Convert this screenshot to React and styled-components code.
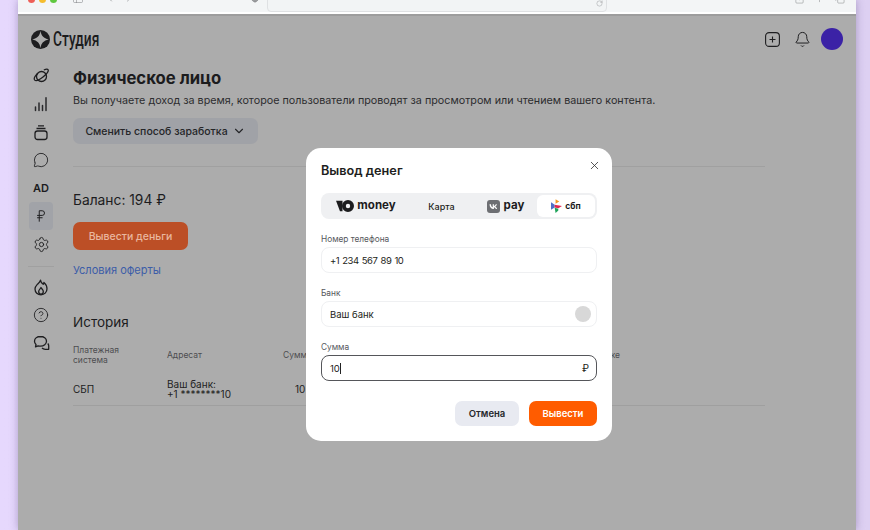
import React from "react";
import styled, { createGlobalStyle } from "styled-components";
import { ChevronDown, ChevronLeft, ChevronRight, X, Plus, Bell, MessageCircle, Settings, HelpCircle, RussianRuble, PanelLeft, Shield, RotateCw, Share, Copy } from "lucide-react";

const Global = createGlobalStyle`
  html, body { margin: 0; padding: 0; height: 100%; }
  body { font-family: "Inter", "Liberation Sans", sans-serif; overflow: hidden; background: #e4d5fb; }
  * { box-sizing: border-box; }
`;

const Desktop = styled.div`
  width: 870px;
  height: 530px;
  padding: 0 14px 0 18px;
  background: linear-gradient(90deg, #e6d8fd 0%, #ddd0f2 100%);
  display: flex;
  overflow: hidden;
`;
const Win = styled.div`
  position: relative;
  flex: 1;
  display: flex;
  flex-direction: column;
  box-shadow: 0 0 8px rgba(60, 40, 100, 0.35);
`;
const Toolbar = styled.div`
  height: 14px;
  flex: none;
  background: #f3f5f6;
  border-bottom: 2px solid #fff;
  overflow: hidden;
  display: grid;
  grid-template-columns: 249px 340px 1fr;
  color: #77797c;
`;
const ToolLeft = styled.div`
  display: flex;
  align-items: flex-start;
  padding-right: 7px;
`;
const Lights = styled.div`
  display: flex;
  gap: 4px;
  margin: -4px 0 0 10px;
`;
const Light = styled.span`
  width: 7px;
  height: 7px;
  border-radius: 50%;
  background: ${(p) => p.$c};
`;
const ToolIcons = styled.div`
  display: flex;
  align-items: flex-start;
  gap: 7px;
  margin: -8px 0 0 15px;
`;
const ShieldSlot = styled.div`
  margin: -7px 0 0 auto;
  display: flex;
`;
const Address = styled.div`
  height: 19px;
  margin-top: -7px;
  background: #f2f4f5;
  border: 1px solid #dfe1e3;
  border-radius: 4px;
  display: flex;
  justify-content: flex-end;
  align-items: flex-start;
  padding: 6px 3px 0 0;
`;
const ToolRight = styled.div`
  margin-top: -7px;
  padding-right: 11px;
  display: flex;
  justify-content: flex-end;
  gap: 9px;
`;

const Page = styled.div`
  flex: 1;
  background: #acacac;
  box-shadow: inset 0 2px 0 #9d9d9d;
  color: #1c1c1e;
  display: flex;
  flex-direction: column;
  padding: 0 13px 0 12px;
`;
const Header = styled.header`
  height: 50px;
  padding-left: 1px;
  display: flex;
  align-items: center;
  justify-content: space-between;
`;
const Logo = styled.div`
  display: flex;
  align-items: center;
  gap: 3px;
`;
const LogoText = styled.span`
  display: block;
  width: 47px;
  font-family: "Roboto", sans-serif;
  font-size: 20px;
  font-weight: 500;
  white-space: nowrap;
  transform: scaleX(0.69);
  transform-origin: left center;
`;
const HeadActions = styled.div`
  display: flex;
  align-items: center;
  gap: 10px;
`;
const AddIcon = styled.svg`
  margin-right: 4px;
`;
const Avatar = styled.div`
  width: 22px;
  height: 22px;
  border-radius: 50%;
  background: #3b22a6;
`;
const Body = styled.div`
  display: flex;
  gap: 21px;
`;
const Rail = styled.nav`
  width: 22px;
  margin-top: -2px;
  display: flex;
  flex-direction: column;
  align-items: center;
`;
const RailItem = styled.div`
  width: 24px;
  height: 28px;
  flex: none;
  display: flex;
  align-items: center;
  justify-content: center;
  font-size: 11px;
  font-weight: 600;
  border-radius: 4px;
  background: ${(p) => (p.$active ? "#a1a3a8" : "transparent")};
`;
const RailLine = styled.div`
  width: 26px;
  height: 1px;
  flex: none;
  background: #a0a0a0;
  margin: 8px 0 6px;
`;
const Main = styled.main`
  width: 692px;
  padding-top: 3px;
`;
const Title = styled.h1`
  margin: 0;
  font-size: 16.7px;
  line-height: 22px;
  font-weight: 700;
`;
const Lead = styled.p`
  margin: 3px 0 0;
  font-size: 10.75px;
  line-height: 18px;
  color: #2d2d2f;
`;
const SwitchBtn = styled.div`
  margin-top: 8px;
  width: 185px;
  height: 26px;
  border-radius: 7px;
  background: #a0a2a7;
  color: #242528;
  display: flex;
  align-items: center;
  justify-content: center;
  gap: 4px;
  font-size: 10.5px;
  font-weight: 500;
`;
const Divider = styled.div`
  height: 1px;
  background: #a0a0a0;
  margin-top: 22px;
`;
const Balance = styled.div`
  margin-top: 24px;
  font-size: 13.8px;
  line-height: 18px;
`;
const Withdraw = styled.div`
  margin-top: 13px;
  width: 115px;
  height: 28px;
  border-radius: 7px;
  background: #bc4f26;
  color: #e9b79f;
  display: flex;
  align-items: center;
  justify-content: center;
  font-size: 10.5px;
  font-weight: 500;
`;
const Offer = styled.a`
  display: block;
  margin-top: 13px;
  font-size: 11px;
  line-height: 15px;
  color: #3c5da8;
`;
const History = styled.h2`
  margin: 34px 0 0;
  font-size: 13.5px;
  line-height: 20px;
  font-weight: 400;
`;
const Table = styled.div`
  margin-top: 5px;
  border-bottom: 1px solid #9f9f9f;
`;
const Row = styled.div`
  display: grid;
  grid-template-columns: 94px 116px 100px 237px;
  align-items: center;
  height: ${(p) => p.$h}px;
  font-size: ${(p) => p.$size}px;
  line-height: 10px;
  color: ${(p) => p.$color};
`;
const Amount = styled.span`
  padding-left: 12px;
`;
const LastHead = styled.span`
  text-align: right;
`;

const Modal = styled.div`
  position: absolute;
  left: 288px;
  top: 148px;
  width: 306px;
  height: 293px;
  background: #fff;
  border-radius: 15px;
  padding: 13px 15px 0;
  color: #1d1e20;
`;
const Close = styled.div`
  position: absolute;
  right: 11px;
  top: 11px;
  color: #333;
  display: flex;
`;
const ModalTitle = styled.h3`
  margin: 0;
  font-size: 12.7px;
  line-height: 19px;
  font-weight: 600;
`;
const Tabs = styled.div`
  margin-top: 13px;
  height: 26px;
  background: #eff0f2;
  border-radius: 8px;
  padding: 2px;
  display: grid;
  grid-template-columns: 86px 65px 63px 1fr;
`;
const Tab = styled.div`
  display: flex;
  align-items: center;
  justify-content: center;
  gap: ${(p) => p.$gap || 3}px;
  font-size: 9px;
  font-weight: 500;
  border-radius: 6px;
  background: ${(p) => (p.$active ? "#fff" : "transparent")};
`;
const Brand = styled.span`
  font-size: ${(p) => p.$size}px;
  font-weight: 700;
  line-height: 1;
  color: #1c1c1e;
`;
const Field = styled.div`
  margin-top: ${(p) => p.$top}px;
`;
const Label = styled.div`
  font-size: 8.3px;
  line-height: 11px;
  color: #55575c;
  margin-bottom: 2px;
`;
const InputBox = styled.div`
  height: 26px;
  border-radius: 8px;
  border: 1px solid ${(p) => (p.$focus ? "#55565a" : "#eff0f2")};
  padding: 0 5px 0 8px;
  display: flex;
  align-items: center;
  justify-content: space-between;
  font-size: 9.5px;
  font-weight: 400;
`;
const Phone = styled.span`
  letter-spacing: -0.5px;
  word-spacing: 1px;
`;
const Caret = styled.span`
  display: inline-block;
  width: 1px;
  height: 11px;
  background: #222;
  vertical-align: -2px;
`;
const Knob = styled.span`
  width: 16px;
  height: 16px;
  border-radius: 50%;
  background: #d8d8d8;
`;
const Ruble = styled.span`
  padding-right: 2px;
  font-size: 10px;
`;
const Footer = styled.div`
  margin-top: 20px;
  display: flex;
  justify-content: flex-end;
  gap: 10px;
`;
const ModalBtn = styled.div`
  width: ${(p) => p.$w}px;
  height: 25px;
  border-radius: 7px;
  background: ${(p) => (p.$primary ? "#ff5c00" : "#e8eaf1")};
  color: ${(p) => (p.$primary ? "#fff" : "#26272b")};
  display: flex;
  align-items: center;
  justify-content: center;
  font-size: 9.5px;
  font-weight: 600;
`;

const ink = "#1e1e20";

function StudioMark() {
  return (
    <svg width="19" height="19" viewBox="0 0 20 20">
      <circle cx="10" cy="10" r="10" fill={ink} />
      <path fill="#acacac" d="M10 .8c.7 5.400 3.300 8 8.700 9.200c-5.400 1.200-8 3.800-8.700 9.200c-.7-5.400-3.300-8-8.700-9.200c5.400-1.200 8-3.800 8.700-9.200z" />
    </svg>
  );
}
function Planet() {
  return (
    <svg width="17" height="17" viewBox="0 0 17 17" fill="none" stroke={ink} strokeWidth="1.3">
      <circle cx="8.5" cy="8.5" r="5" />
      <path d="M4.500 5.500C2 8 .8 10.700 1.600 11.800c1.200 1.500 5-.1 8.400-2.800s5.700-6 5.100-7.200c-.5-.9-2.300-.7-4.300.2" />
    </svg>
  );
}
function Bars() {
  return (
    <svg width="16" height="16" viewBox="0 0 16 16" fill="none" stroke="#2a2a2c" strokeWidth="1.5" strokeLinecap="round">
      <path d="M2.500 14.500v-3.500M6 14.500v-7.500M9.500 14.500v-5M13 14.500V1.800" />
    </svg>
  );
}
function Stack() {
  return (
    <svg width="16" height="18" viewBox="0 0 16 18" fill="none" stroke={ink} strokeWidth="1.300">
      <rect x="2" y="8" width="12" height="8.500" rx="2.500" />
      <path d="M3.500 5.500h9M5 2.800h6" />
    </svg>
  );
}
function FlameIcon() {
  return (
    <svg width="16" height="17" viewBox="0 0 16 17" fill="none" stroke={ink} strokeWidth="1.300" strokeLinejoin="round">
      <path d="M7.500 1.200c.4 2.500 1.700 3.300 2.700 4.100c.4-.6.600-1.100.7-1.800c2 1.700 3.100 4 3.100 6.300c0 3.600-2.700 6-6 6s-6-2.400-6-5.700c0-2.200 1.200-3.500 2.300-4.700c1.300-1.300 2.500-2.300 3.200-4.200z" />
      <path d="M8 8.500c.5 1.400 2.300 2 2.300 3.900c0 1.500-1 2.800-2.300 2.800s-2.300-1.300-2.300-2.800c0-1.700 1.700-2.300 2.300-3.900z" />
    </svg>
  );
}
function ChatsIcon() {
  return (
    <svg width="17" height="16" viewBox="0 0 17 16" fill="none" stroke={ink} strokeWidth="1.300" strokeLinejoin="round">
      <path d="M7.500 1.500c-3.300 0-6 2-6 4.800c0 1.300.6 2.400 1.500 3.200l-.5 2.300l2.600-1c.8.3 1.600.4 2.400.4c3.300 0 6-2.100 6-4.900s-2.700-4.800-6-4.800z" />
      <path d="M14.800 8.500c.6.700.9 1.400.9 2.300v3.500h-3.500c-1.200 0-2.400-.5-3.200-1.300" />
    </svg>
  );
}
function UMoneyMark() {
  return (
    <svg width="18" height="12" viewBox="0 0 18 12" fill="#1c1c1e">
      <path d="M0 .8h6.500v10.400H4L0 .8z" />
      <path fillRule="evenodd" d="M12 0a6 6 0 1 0 0 12a6 6 0 0 0 0-12zm0 3.800a2.200 2.200 0 1 1 0 4.400a2.200 2.200 0 0 1 0-4.400z" />
    </svg>
  );
}
function VkMark() {
  return (
    <svg width="13" height="13" viewBox="0 0 13 13">
      <rect width="13" height="13" rx="3" fill="#6d6f73" />
      <path d="M2.500 4.200c.1 3 1.700 4.800 4.200 4.800h.2V7.200c.9.100 1.600.8 1.900 1.800h1.300c-.4-1.400-1.300-2.100-1.900-2.400c.6-.3 1.400-1 1.700-2.400H8.700c-.3 1-1 1.700-1.800 1.800V4.200H5.700v3.100C5 7.100 4 6.300 4 4.200H2.500z" fill="#fff" />
    </svg>
  );
}
function SbpMark() {
  return (
    <svg width="11" height="14" viewBox="0 0 12 15">
      <path d="M0 3.500l4 2.500v3l-4 2.500z" fill="#4f6fc9" />
      <path d="M5 0l4 2.500l-4 2.500z" fill="#f59a23" />
      <path d="M4 6l8 1.500l-4 2.500l-4-1z" fill="#e2284f" />
      <path d="M4 9.500l4 1v2L5 15z" fill="#1fa45a" />
    </svg>
  );
}

export default function App() {
  return (
    <Desktop>
      <Global />
      <Win>
        <Toolbar>
          <ToolLeft>
            <Lights>
              <Light $c="#ee5f57" />
              <Light $c="#f5bd2e" />
              <Light $c="#5fc83f" />
            </Lights>
            <ToolIcons>
              <PanelLeft size={12} strokeWidth={1} />
              <ChevronDown size={6} strokeWidth={2} />
              <ChevronLeft size={12} strokeWidth={1.2} />
              <ChevronRight size={12} strokeWidth={1.2} />
            </ToolIcons>
            <ShieldSlot><Shield size={10} strokeWidth={1.2} fill="#9a9c9e" /></ShieldSlot>
          </ToolLeft>
          <Address><RotateCw size={7} strokeWidth={1.2} /></Address>
          <ToolRight>
            <Share size={11} strokeWidth={1} />
            <Plus size={11} strokeWidth={1} />
            <Copy size={11} strokeWidth={1} />
          </ToolRight>
        </Toolbar>
        <Page>
          <Header>
            <Logo>
              <StudioMark />
              <LogoText>Студия</LogoText>
            </Logo>
            <HeadActions>
              <AddIcon width="15" height="15" viewBox="0 0 15 15" fill="none" stroke={ink} strokeWidth="1.100">
                <rect x="0.600" y="0.600" width="13.800" height="13.800" rx="3.500" />
                <path d="M7.500 4.500v6M4.500 7.500h6" />
              </AddIcon>
              <Bell size={17} strokeWidth={1.4} color={ink} />
              <Avatar />
            </HeadActions>
          </Header>
          <Body>
            <Rail>
              <RailItem><Planet /></RailItem>
              <RailItem><Bars /></RailItem>
              <RailItem><Stack /></RailItem>
              <RailItem><MessageCircle size={16} strokeWidth={1.3} color={ink} /></RailItem>
              <RailItem>AD</RailItem>
              <RailItem $active><RussianRuble size={14} strokeWidth={1.7} color={ink} /></RailItem>
              <RailItem><Settings size={17} strokeWidth={1.3} color={ink} /></RailItem>
              <RailLine />
              <RailItem><FlameIcon /></RailItem>
              <RailItem><HelpCircle size={16} strokeWidth={1.3} color={ink} /></RailItem>
              <RailItem><ChatsIcon /></RailItem>
            </Rail>
            <Main>
              <Title>Физическое лицо</Title>
              <Lead>Вы получаете доход за время, которое пользователи проводят за просмотром или чтением вашего контента.</Lead>
              <SwitchBtn>Сменить способ заработка <ChevronDown size={14} strokeWidth={1.9} /></SwitchBtn>
              <Divider />
              <Balance>Баланс: 194 ₽</Balance>
              <Withdraw>Вывести деньги</Withdraw>
              <Offer>Условия оферты</Offer>
              <History>История</History>
              <Table>
                <Row $h={35} $size={8.5} $color="#4c4d50">
                  <span>Платежная<br />система</span>
                  <span>Адресат</span>
                  <span>Сумма</span>
                  <LastHead>В заявке</LastHead>
                </Row>
                <Row $h={33} $size={10} $color="#222">
                  <span>СБП</span>
                  <span>Ваш банк:<br />+1 ********10</span>
                  <Amount>10 ₽</Amount>
                  <span />
                </Row>
              </Table>
            </Main>
          </Body>
        </Page>
        <Modal>
          <Close><X size={13} strokeWidth={1.5} /></Close>
          <ModalTitle>Вывод денег</ModalTitle>
          <Tabs>
            <Tab><UMoneyMark /><Brand $size={11.5}>money</Brand></Tab>
            <Tab>Карта</Tab>
            <Tab $gap={4}><VkMark /><Brand $size={11.5}>pay</Brand></Tab>
            <Tab $active $gap={3}><SbpMark /><Brand $size={8.5}>сбп</Brand></Tab>
          </Tabs>
          <Field $top={15}>
            <Label>Номер телефона</Label>
            <InputBox><Phone>+1 234 567 89 10</Phone></InputBox>
          </Field>
          <Field $top={15}>
            <Label>Банк</Label>
            <InputBox>Ваш банк<Knob /></InputBox>
          </Field>
          <Field $top={15}>
            <Label>Сумма</Label>
            <InputBox $focus><span>10<Caret /></span><Ruble>₽</Ruble></InputBox>
          </Field>
          <Footer>
            <ModalBtn $w={64}>Отмена</ModalBtn>
            <ModalBtn $w={68} $primary>Вывести</ModalBtn>
          </Footer>
        </Modal>
      </Win>
    </Desktop>
  );
}
